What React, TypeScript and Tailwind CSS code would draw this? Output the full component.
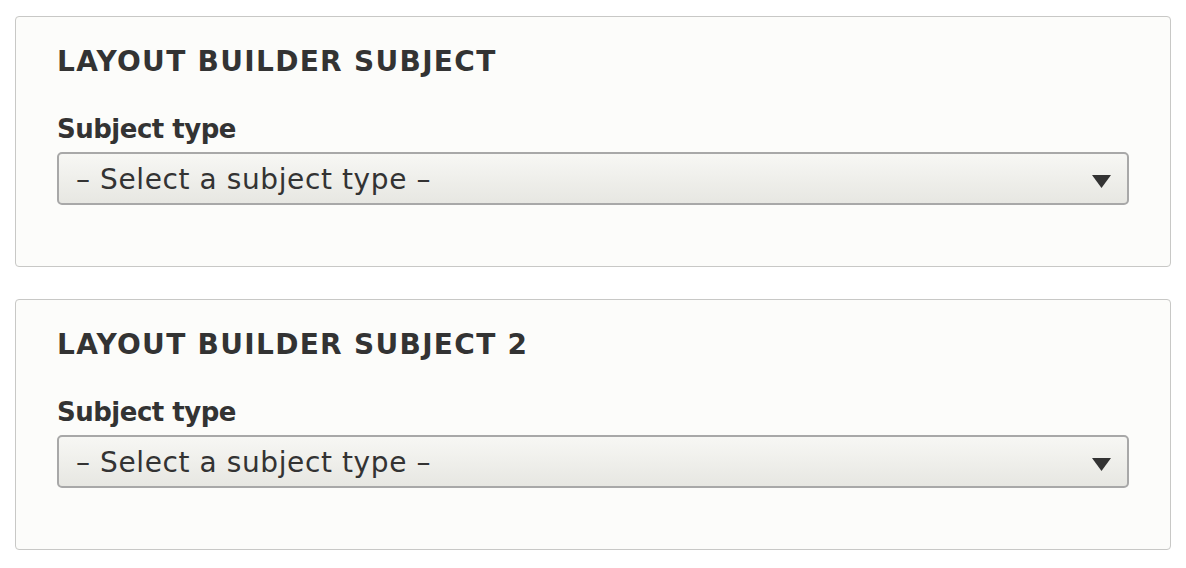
import React from 'react';

const SubjectFieldset: React.FC<{ title: string }> = ({ title }) => {
  return (
    <fieldset className="rounded-[4px] border border-[#c8c8c6] bg-[#fcfcfa] px-[41px] pt-[28px] pb-[61px]">
      <h2 className="text-[28px] leading-[34px] font-bold uppercase tracking-[1.3px] text-[#333]">
        {title}
      </h2>
      <label className="mt-[34px] block text-[26px] leading-[32px] font-bold tracking-[-0.5px] text-[#333]">
        Subject type
      </label>
      <div className="mt-[7px] flex h-[53px] items-center rounded-[5px] border-2 border-[#a8a8a8] bg-gradient-to-b from-[#f7f7f4] to-[#e7e7e2] pl-[17px] pr-[16px]">
        <span className="mt-[3px] flex-1 text-[28px] tracking-[0.6px] text-[#333]">– Select a subject type –</span>
        <svg width="19" height="13" viewBox="0 0 19 13" className="mt-[5px]">
          <polygon points="0,0 19,0 9.5,13" fill="#333" />
        </svg>
      </div>
    </fieldset>
  );
};

export default function App() {
  return (
    <div className="flex flex-col gap-[32px] px-[15px] pt-[16px]" style={{ fontFamily: '"DejaVu Sans", "Liberation Sans", sans-serif' }}>
      <SubjectFieldset title="Layout Builder Subject" />
      <SubjectFieldset title="Layout Builder Subject 2" />
    </div>
  );
}
